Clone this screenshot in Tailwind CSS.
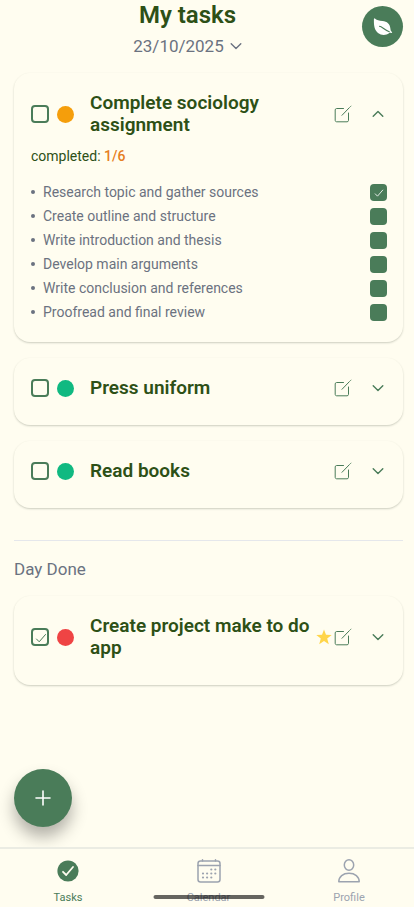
<!DOCTYPE html>
<html lang="en">
<head>
<meta charset="utf-8">
<meta name="viewport" content="width=device-width, initial-scale=1">
<title>My tasks</title>
<script src="https://cdn.jsdelivr.net/npm/@tailwindcss/browser@4"></script>
</head>
<body class="flex min-h-screen flex-col bg-[#fffdf0] font-[Roboto,sans-serif] text-[#2d5016]">

<svg class="hidden" aria-hidden="true">
  <symbol id="edit" viewBox="0 0 18 18" fill="none" stroke="currentColor" stroke-linecap="round" stroke-linejoin="round">
    <path d="M9.5 3.5H2.6C1.8 3.500 1.200 4.100 1.200 4.900V15.400C1.200 16.200 1.800 16.800 2.600 16.800H13.100C13.900 16.800 14.500 16.200 14.500 15.400V8M8 10.300L15.400 2.600M16.600 1.500L17 1.100"/>
  </symbol>
  <symbol id="down" viewBox="0 0 12 12" fill="none" stroke="currentColor" stroke-linecap="round" stroke-linejoin="round">
    <path d="M1.200 3.700L6 8.500L10.800 3.700"/>
  </symbol>
  <symbol id="tick" viewBox="0 0 12 12" fill="none" stroke="currentColor" stroke-linecap="round" stroke-linejoin="round">
    <path d="M1.500 7L4.200 9.800L10.500 2.500"/>
  </symbol>
</svg>

<header class="relative flex flex-col items-center gap-1 pr-[39px]">
  <h1 class="text-2xl/[30px] font-semibold">My tasks</h1>
  <button type="button" class="flex items-center gap-1.5 text-[17px]/6 text-[#6b7280]">23/10/2025
    <svg class="size-3 stroke-[1.400]"><use href="#down"/></svg>
  </button>
  <button type="button" aria-label="Theme" class="absolute top-1.5 right-[11px] flex size-[41px] items-center justify-center rounded-full bg-[#4a7c59] text-white">
    <svg class="size-5" viewBox="0 0 20 20"><path fill="currentColor" d="M1.500 1.300C1 1.300 .9 2 .9 3C.8 9 1.600 13 5 16C8.300 18.500 13 18.500 16 16.200C16.700 15.600 17.500 15.900 18.600 15.900C19.300 15.800 19.300 15 18.700 14.700C17.800 14.300 17.600 13.500 17.500 12.300C17 6.500 14 4.700 9.500 4.100C6 3.700 4 3.200 2.200 1.700C1.900 1.500 1.700 1.300 1.500 1.300Z"/><path d="M6.500 9.300C9 9.500 11.300 13 16.300 14.700" fill="none" stroke="#4a7c59" stroke-width="1.100" stroke-linecap="round"/></svg>
  </button>
</header>

<main class="flex flex-1 flex-col gap-4 pt-[15px] pr-[11px] pb-[222px] pl-3.5">

  <article class="rounded-2xl pr-4 pl-[17px] pt-[19px] pb-[18px] shadow-[0_1px_2px_rgba(45,60,40,0.24)]">
    <div class="flex items-center">
      <input type="checkbox" aria-label="Complete sociology assignment" class="size-[18px] shrink-0 appearance-none rounded border-2 border-[#4a7c59]">
      <span class="ml-2 size-[17px] shrink-0 rounded-full bg-[#f59e0b]"></span>
      <h2 class="ml-4 flex-1 text-[19px]/[22px] font-semibold">Complete sociology assignment</h2>
      <button type="button" aria-label="Edit" class="text-[#4a7c59]"><svg class="size-[18px]"><use href="#edit"/></svg></button>
      <button type="button" aria-label="Collapse" class="mr-[3px] ml-5 text-[#4a7c59]"><svg class="size-3 rotate-180 stroke-[1.400]"><use href="#down"/></svg></button>
    </div>
    <p class="mt-2.5 text-sm/5">completed: <span class="font-medium text-[#e67e22]">1/6</span></p>
    <ul class="mt-3.5 text-sm/6 text-[#6b7280]">
      <li class="flex items-center gap-2"><span class="size-1 rounded-full bg-[#6b7280]"></span><label for="s1" class="flex-1">Research topic and gather sources</label>
        <span class="relative flex"><input id="s1" type="checkbox" checked class="size-[17px] appearance-none rounded bg-[#4a7c59]"><svg class="pointer-events-none absolute top-1 left-1 size-2.5 text-white"><use href="#tick"/></svg></span></li>
      <li class="flex items-center gap-2"><span class="size-1 rounded-full bg-[#6b7280]"></span><label for="s2" class="flex-1">Create outline and structure</label><input id="s2" type="checkbox" class="size-[17px] appearance-none rounded bg-[#4a7c59]"></li>
      <li class="flex items-center gap-2"><span class="size-1 rounded-full bg-[#6b7280]"></span><label for="s3" class="flex-1">Write introduction and thesis</label><input id="s3" type="checkbox" class="size-[17px] appearance-none rounded bg-[#4a7c59]"></li>
      <li class="flex items-center gap-2"><span class="size-1 rounded-full bg-[#6b7280]"></span><label for="s4" class="flex-1">Develop main arguments</label><input id="s4" type="checkbox" class="size-[17px] appearance-none rounded bg-[#4a7c59]"></li>
      <li class="flex items-center gap-2"><span class="size-1 rounded-full bg-[#6b7280]"></span><label for="s5" class="flex-1">Write conclusion and references</label><input id="s5" type="checkbox" class="size-[17px] appearance-none rounded bg-[#4a7c59]"></li>
      <li class="flex items-center gap-2"><span class="size-1 rounded-full bg-[#6b7280]"></span><label for="s6" class="flex-1">Proofread and final review</label><input id="s6" type="checkbox" class="size-[17px] appearance-none rounded bg-[#4a7c59]"></li>
    </ul>
  </article>

  <article class="rounded-2xl pr-4 pl-[17px] pt-[19px] pb-[26px] shadow-[0_1px_2px_rgba(45,60,40,0.24)]">
    <div class="flex items-center">
      <input type="checkbox" aria-label="Press uniform" class="size-[18px] shrink-0 appearance-none rounded border-2 border-[#4a7c59]">
      <span class="ml-2 size-[17px] shrink-0 rounded-full bg-[#10b981]"></span>
      <h2 class="ml-4 flex-1 text-[19px]/[22px] font-semibold">Press uniform</h2>
      <button type="button" aria-label="Edit" class="text-[#4a7c59]"><svg class="size-[18px]"><use href="#edit"/></svg></button>
      <button type="button" aria-label="Expand" class="mr-[3px] ml-5 text-[#4a7c59]"><svg class="size-3 stroke-[1.400]"><use href="#down"/></svg></button>
    </div>
  </article>

  <article class="rounded-2xl pr-4 pl-[17px] pt-[19px] pb-[26px] shadow-[0_1px_2px_rgba(45,60,40,0.24)]">
    <div class="flex items-center">
      <input type="checkbox" aria-label="Read books" class="size-[18px] shrink-0 appearance-none rounded border-2 border-[#4a7c59]">
      <span class="ml-2 size-[17px] shrink-0 rounded-full bg-[#10b981]"></span>
      <h2 class="ml-4 flex-1 text-[19px]/[22px] font-semibold">Read books</h2>
      <button type="button" aria-label="Edit" class="text-[#4a7c59]"><svg class="size-[18px]"><use href="#edit"/></svg></button>
      <button type="button" aria-label="Expand" class="mr-[3px] ml-5 text-[#4a7c59]"><svg class="size-3 stroke-[1.400]"><use href="#down"/></svg></button>
    </div>
  </article>

  <section class="mt-4 border-t border-gray-200 pt-4">
    <h2 class="text-[17px]/6 text-[#6b7280]">Day Done</h2>
    <article class="mt-[15px] rounded-2xl pr-4 pl-[17px] pt-[19px] pb-[26px] shadow-[0_1px_2px_rgba(45,60,40,0.24)]">
      <div class="flex items-center">
        <span class="relative flex shrink-0"><input type="checkbox" checked aria-label="Create project make to do app" class="size-[18px] appearance-none rounded border-2 border-[#4a7c59]"><svg class="pointer-events-none absolute top-1 left-1 size-3 text-[#4a7c59]"><use href="#tick"/></svg></span>
        <span class="ml-2 size-[17px] shrink-0 rounded-full bg-[#ef4444]"></span>
        <h3 class="ml-4 flex-1 text-[19px]/[22px] font-semibold">Create project make to do app</h3>
        <svg class="mr-0.5 size-4 shrink-0" viewBox="0 0 16 16" role="img" aria-label="Important"><path fill="#ffd54a" d="M8 .4L10 5.800L15.700 6L11.200 9.600L12.800 15.200L8 12L3.200 15.200L4.800 9.600L.3 6L6 5.800Z"/></svg>
        <button type="button" aria-label="Edit" class="text-[#4a7c59]"><svg class="size-[18px]"><use href="#edit"/></svg></button>
        <button type="button" aria-label="Expand" class="mr-[3px] ml-5 text-[#4a7c59]"><svg class="size-3 stroke-[1.400]"><use href="#down"/></svg></button>
      </div>
    </article>
  </section>
</main>

<button type="button" aria-label="Add task" class="fixed bottom-20 left-3.5 flex size-[58px] items-center justify-center rounded-full bg-[#4a7c59] text-white shadow-[0_10px_16px_rgba(0,0,0,0.3)]">
  <svg class="size-4" viewBox="0 0 16 16" fill="none" stroke="currentColor" stroke-width="1.600" stroke-linecap="round"><path d="M8 1V15M1 8H15"/></svg>
</button>

<nav class="fixed inset-x-0 bottom-0 flex justify-between border-t-2 border-[#ebece3] bg-[#fffdf0] pt-2.5 pr-[37px] pb-0.5 pl-10 text-[11px]/[14px] text-[#9ca3af]">
  <a href="#tasks" class="flex w-14 flex-col items-center gap-2 text-[#4a7c59]">
    <svg class="size-6" viewBox="0 0 24 24"><circle cx="12" cy="12" r="10.600" fill="currentColor"/><path d="M7 12.800L10.200 16L17 8" fill="none" stroke="#fffdf0" stroke-width="1.800" stroke-linecap="round" stroke-linejoin="round"/></svg>
    Tasks
  </a>
  <a href="#calendar" class="flex w-14 flex-col items-center gap-2">
    <svg class="size-6" viewBox="0 0 24 24" fill="none" stroke="currentColor" stroke-width="1.500" stroke-linecap="round"><rect x="1" y="2" width="22" height="21" rx="2.500"/><path d="M1 6.500H23M5.500 .8V2M18.500 .8V2"/><path stroke-width="2.200" d="M14.300 10.500h.01M18.300 10.500h.01M6 14.500h.01M10.100 14.500h.01M14.300 14.500h.01M18.300 14.500h.01M6 18.500h.01M10.100 18.500h.01M14.300 18.500h.01"/></svg>
    Calendar
  </a>
  <a href="#profile" class="flex w-14 flex-col items-center gap-2">
    <svg class="size-6" viewBox="0 0 24 24" fill="none" stroke="currentColor" stroke-width="1.500" stroke-linejoin="round"><ellipse cx="12" cy="6" rx="4.700" ry="5.200"/><path d="M1.800 22.800C1.800 17.500 6 14.300 12 14.300S22.200 17.500 22.200 22.800Z"/></svg>
    Profile
  </a>
  <span class="absolute bottom-2 left-1/2 ml-[2px] h-1 w-[111px] -translate-x-1/2 rounded-full bg-black/60"></span>
</nav>
</body>
</html>
